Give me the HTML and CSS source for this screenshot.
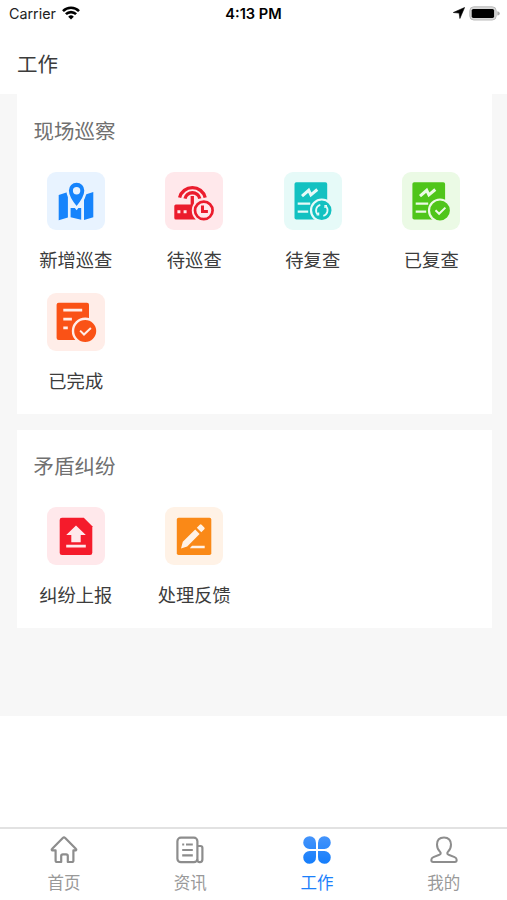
FILE: index.html
```html
<!DOCTYPE html>
<html lang="zh-CN">
<head>
<meta charset="utf-8">
<title>工作</title>
<link rel="stylesheet" href="styles.css">
</head>
<body>
<div class="app">
  <header class="status">
    <div class="carrier"><span>Carrier</span>
      <svg width="18" height="14" viewBox="0 0 18 14" fill="none" stroke="#000" stroke-width="2.6"><path d="M1 5.1a11.3 11.3 0 0 1 16 0M3.9 8.2a7.2 7.2 0 0 1 10.2 0"/><path d="M9 13.6 6.2 10.7a4 4 0 0 1 5.6 0z" fill="#000" stroke="none"/></svg>
    </div>
    <time>4:13 PM</time>
    <div class="power">
      <svg width="12" height="12" viewBox="0 0 12 12"><path d="M11.6.5 6.9 11.5 6.1 6.1.3 5.5z" stroke="#000" stroke-width=".6"/></svg>
      <svg width="31" height="15" viewBox="0 0 31 15"><rect x=".8" y=".8" width="26.4" height="13.2" rx="4" fill="#d8d8d8" stroke="#bbb"/><rect x="2.7" y="2.9" width="22.4" height="9" rx="1.6"/><path d="M28.3 5.2q2.5.4 2.5 2.2t-2.5 2.2z" fill="#aaa"/></svg>
    </div>
  </header>
  <h1 class="title">工作</h1>
  <main class="content">
    <section class="card">
      <h2>现场巡察</h2>
      <div class="grid">
        <a class="item">
          <svg class="tile blue" viewBox="0 0 58 58"><path fill="currentColor" d="M11.7 23l9.2-3v25.5l-9.2 2.7zM23.6 36v9.2l10.6 2.6V36zM37 23l9.3-3v25.2L37 48z"/><path class="cut" stroke-width="2.6" d="M29.6 9.5c-5.1 0-9 4-9 9 0 6 4.4 12.2 9 17.7 4.6-5.5 9-11.7 9-17.7 0-5-3.9-9-9-9z" fill="currentColor"/><circle cx="29.6" cy="18.8" r="3.7" fill="#e8f3ff"/></svg>
          <span>新增巡查</span></a>
        <a class="item">
          <svg class="tile red" viewBox="0 0 58 58"><g fill="none" stroke="currentColor" stroke-width="3.3"><path d="M14.6 25.6a13.2 13.2 0 0 1 25.6 0M20 26.6a7.6 7.6 0 0 1 14.8 0M27.3 24V34"/></g><rect x="9.3" y="32.5" width="22" height="15" rx="1.5" fill="currentColor"/><path d="M12.4 38.3h3v3h-3zm6.2 0h3v3h-3z" fill="#ffe8eb"/><circle cx="38.8" cy="38.4" r="12" fill="#ffe8eb"/><circle cx="38.8" cy="38.4" r="8.8" fill="none" stroke="currentColor" stroke-width="2.7"/><path d="M37.5 33.4v6h5.4" fill="none" stroke="currentColor" stroke-width="3"/></svg>
          <span>待巡查</span></a>
        <a class="item">
          <svg class="tile teal" viewBox="0 0 58 58"><rect x="10.5" y="10.3" width="32.7" height="37.2" rx="1.8" fill="currentColor"/><g class="marks"><path d="M18 24.2l6.7-5.9 2.2 4.6 6.4-5.4" stroke-width="3"/><path d="M13.7 31.7h12.5M13.7 39.7h10.5" stroke-width="2.3"/></g><circle class="cut" cx="37.8" cy="38.3" r="10.8" fill="currentColor" stroke-width="2.2"/><g fill="none" stroke="#e6faf8" stroke-width="1.8"><path d="M36.3 32.8a5.7 5.7 0 0 0-2.5 9.6M39.3 43.8a5.7 5.7 0 0 0 2.5-9.6"/><path d="M34.6 40.5v2.4h-2M41 36.1v-2.4h2" stroke-width="1.3"/></g></svg>
          <span>待复查</span></a>
        <a class="item">
          <svg class="tile green" viewBox="0 0 58 58"><rect x="10.4" y="10.3" width="32.7" height="37.2" rx="1.8" fill="currentColor"/><g class="marks"><path d="M18 24.2l6.7-5.9 2.2 4.6 6.4-5.4" stroke-width="3"/><path d="M13.7 31.7h12.5M13.7 39.7h10.5" stroke-width="2.3"/></g><circle class="cut" cx="38" cy="38.5" r="11" fill="currentColor" stroke-width="2.2"/><path class="marks" d="M33.5 38.2l3.6 3.6 6.3-6.2" stroke-width="2"/></svg>
          <span>已复查</span></a>
        <a class="item">
          <svg class="tile orange" viewBox="0 0 58 58"><rect x="9.6" y="9.7" width="32.4" height="37.3" rx="2" fill="currentColor"/><path class="marks" d="M16.3 17.2h18.9M16.3 26.2h8.6M16.3 34.8h4.5" stroke-width="2.8"/><circle class="cut" cx="38.2" cy="38" r="12.2" fill="currentColor" stroke-width="2.4"/><path class="marks" d="M33.1 37.6l3.9 3.9 6.9-6.4" stroke-width="2"/></svg>
          <span>已完成</span></a>
      </div>
    </section>
    <section class="card second">
      <h2>矛盾纠纷</h2>
      <div class="grid">
        <a class="item">
          <svg class="tile crimson" viewBox="0 0 58 58"><path fill="currentColor" d="M15 10.7h21.8l8.5 8.5v26.6q0 2.3-2.3 2.3H15q-2.3 0-2.3-2.3V13q0-2.3 2.3-2.3z"/><path fill="#ffe8eb" d="M29 18.5l9.8 9.4h-5.1v7.3h-9.4v-7.3h-5.1zM19.2 37.8h19.6v2.6H19.2z"/></svg>
          <span>纠纷上报</span></a>
        <a class="item">
          <svg class="tile amber" viewBox="0 0 58 58"><rect x="11.8" y="10.7" width="34.5" height="37.3" rx="1.8" fill="currentColor"/><path fill="#fff2e6" d="M16 41.4l1.8-6.6L30.2 22.4l4.4 4.5-12.4 12.6zM31.8 20.8l3-3q.9-.9 1.8 0l2.7 2.7q.9.9 0 1.8l-3 3zM27 38.8h12.7v2.4H24.8z"/></svg>
          <span>处理反馈</span></a>
      </div>
    </section>
  </main>
  <nav class="tabs">
    <a><svg class="line" viewBox="0 0 28 28" stroke-width="2.2"><path d="M5.6 14.4H2.2q-1-.8 0-1.7L12.8 2q1.2-1.1 2.4 0l10.6 10.7q1 .9 0 1.7h-2.4v10q0 1.6-1.6 1.6h-4v-6q0-1.7-1.7-1.7h-3.2q-1.7 0-1.7 1.7v6H7.3q-1.7 0-1.7-1.6z"/></svg><span>首页</span></a>
    <a><svg class="line" viewBox="0 0 28 28" stroke-width="2.2"><rect x="1.4" y="1.7" width="20" height="24.5" rx="3.5"/><path d="M21.4 10h3q2 0 2 2v11.2q0 3-2.6 3t-2.4-3M6.2 8.5h2M10 8.5h6.8M6.2 14h10.6M6.2 19.4h10.6"/></svg><span>资讯</span></a>
    <a class="active"><svg viewBox="0 0 28 28"><defs><linearGradient id="petal" x1="0" y1="0" x2="0" y2="28" gradientUnits="userSpaceOnUse"><stop stop-color="#4594fb"/><stop offset="1" stop-color="#147dfb"/></linearGradient></defs><path fill="url(#petal)" d="M13 13H7A6.4 6.4 0 1 1 13 7zM15 13V7a6.4 6.4 0 1 1 6 6zM13 15v6a6.4 6.4 0 1 1-6-6zM15 15h6a6.4 6.4 0 1 1-6 6z"/></svg><span>工作</span></a>
    <a><svg class="line" viewBox="0 0 28 28" stroke-width="2"><path d="M14 1.5c-4.7 0-7 3-7 7.1 0 3.2 1.3 5.6 3 7.2 1.2 1.1.8 2.3-.6 2.9l-6 2.4c-1.4.6-2.1 1.5-2.1 3 0 1.3.6 2 1.9 2h21.6c1.3 0 1.9-.7 1.9-2 0-1.5-.7-2.4-2.1-3l-6-2.4c-1.4-.6-1.8-1.8-.6-2.9 1.7-1.6 3-4 3-7.2 0-4.1-2.3-7.1-7-7.1z"/></svg><span>我的</span></a>
  </nav>
</div>
</body>
</html>
```
FILE: styles.css
```css
* { box-sizing: border-box; }
body {
  margin: 0;
  background: #fff;
  color: #3c3c3c;
  font-family: "Noto Sans CJK SC", sans-serif;
}
.app { height: 900px; display: flex; flex-direction: column; overflow: hidden; }
.status {
  height: 28px;
  padding: 0 7px 0 9px;
  display: grid;
  grid-template-columns: 1fr auto 1fr;
  align-items: center;
  font: 14.3px/28px Inter, sans-serif;
  color: #222;
}
.status svg { display: block; }
.carrier { display: flex; align-items: center; gap: 6px; }
.carrier svg { margin-top: -2px; }
.status time { font-weight: 600; color: #000; font-size: 14.6px; padding-right: 2px; }
.power { display: flex; align-items: center; justify-content: flex-end; gap: 4px; margin-top: -2px; }
.title {
  margin: 0;
  height: 66px;
  padding: 5px 17px 0;
  font-size: 20.5px;
  line-height: 60px;
  font-weight: 400;
}
.content { height: 622px; background: #f7f7f7; padding: 0 15.5px 0 16.5px; }
.card { height: 320px; background: #fff; padding-top: 21px; }
.second { height: 198px; margin-top: 16px; padding-top: 20px; }
.card h2 {
  margin: 0 0 27px;
  padding-left: 17px;
  font-size: 20.5px;
  line-height: 30px;
  font-weight: 400;
  color: #707070;
}
.grid {
  display: grid;
  grid-template-columns: repeat(4, 1fr);
  row-gap: 21px;
  padding-right: 1px;
}
.item { height: 100px; display: flex; flex-direction: column; align-items: center; }
.item span { font-size: 18.3px; line-height: 28px; margin-top: 15px; white-space: nowrap; }
.tile { width: 58px; height: 58px; border-radius: 9px; flex: none; background: var(--tint); }
.cut { stroke: var(--tint); }
.marks { fill: none; stroke: var(--tint); }
.blue { color: #1684fc; --tint: #e8f3ff; }
.red { color: #eb1c2d; --tint: #ffe8eb; }
.teal { color: #13c1c1; --tint: #e6faf8; }
.green { color: #4fc51a; --tint: #ebfae5; }
.orange { color: #fa5216; --tint: #ffede8; }
.crimson { color: #f51b2b; --tint: #ffe8eb; }
.amber { color: #fa8917; --tint: #fff2e6; }
.tabs {
  height: 73px;
  margin-top: auto;
  border-top: 2px solid #e2e2e2;
  display: grid;
  grid-template-columns: repeat(4, 1fr);
  color: #999;
}
.tabs a { display: flex; flex-direction: column; align-items: center; padding-top: 7px; }
.tabs a:first-child { padding-left: 1px; }
.tabs svg { width: 28px; height: 28px; }
.tabs span { font-size: 16.5px; line-height: 24px; margin-top: 6px; }
.line { fill: none; stroke: #8d8d8d; stroke-linejoin: round; }
.tabs .active { color: #1b80fb; }
```
